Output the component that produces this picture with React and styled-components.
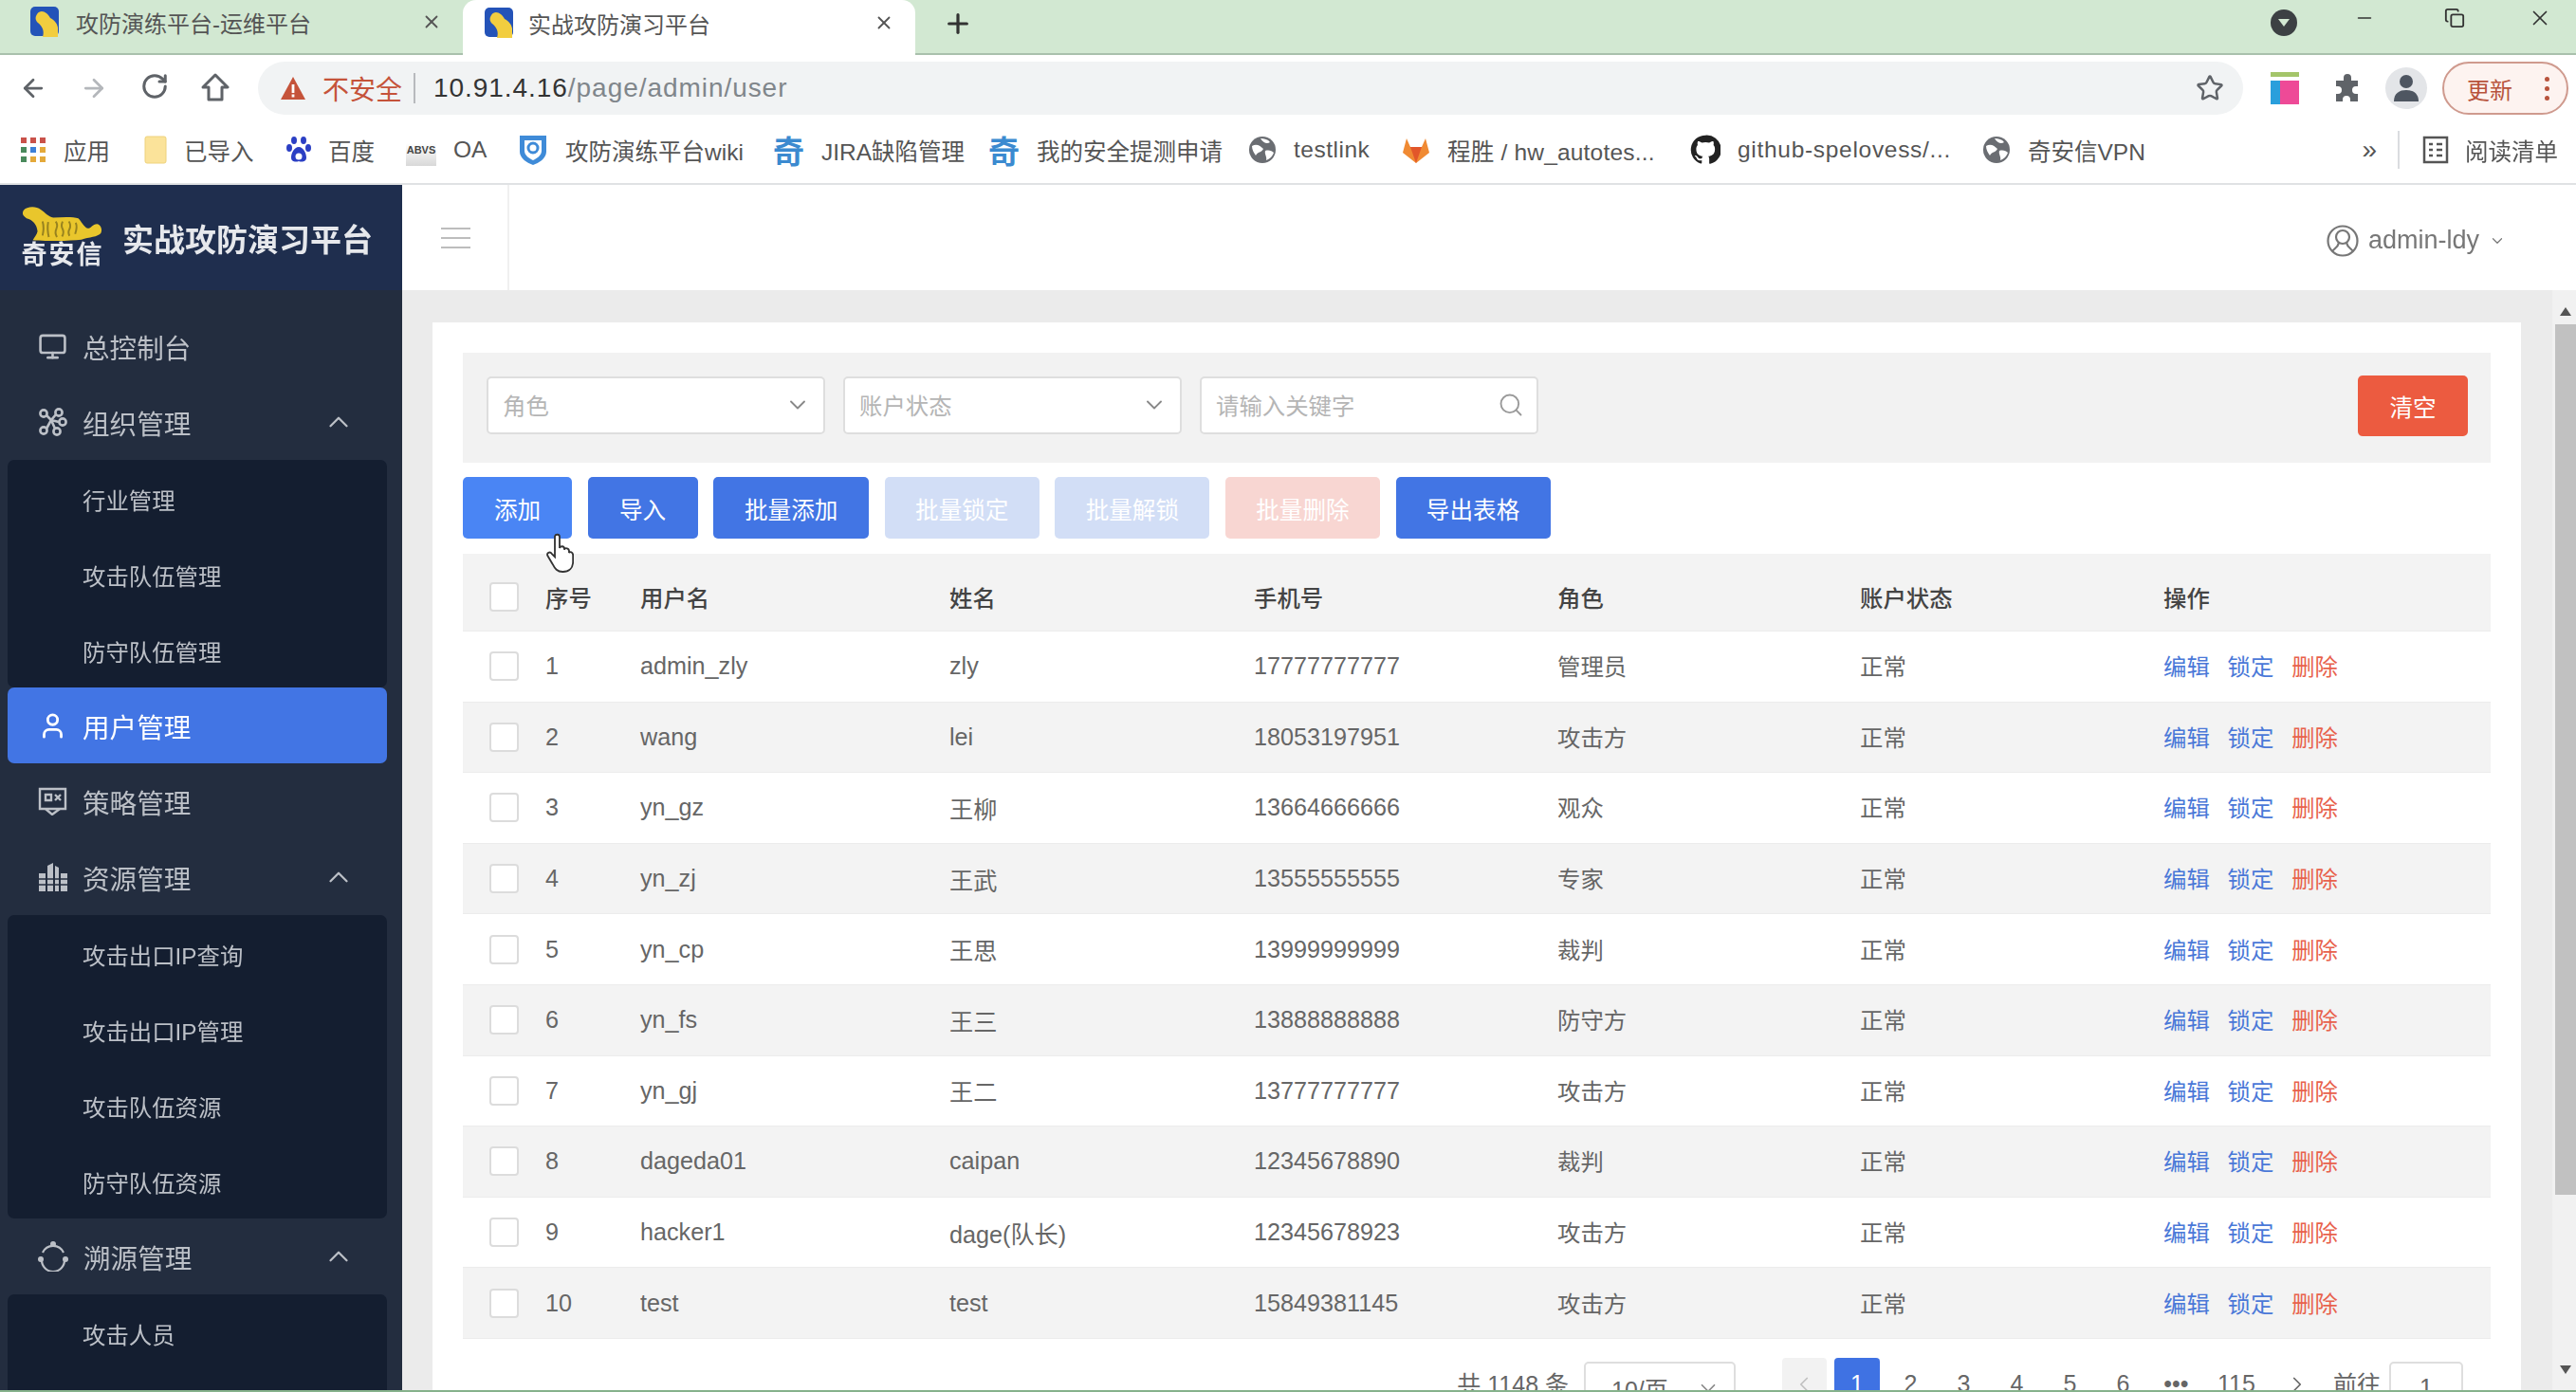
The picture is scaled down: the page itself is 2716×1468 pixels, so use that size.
import React from 'react';
import styled, { createGlobalStyle } from 'styled-components';
import {
  ArrowLeft, ArrowRight, RotateCw, Star, ChevronDown, ChevronUp, ChevronLeft, ChevronRight,
  Search, Monitor, User, Plus, Minus, X, Copy,
} from 'lucide-react';

const Global = createGlobalStyle`
  html, body { margin: 0; padding: 0; overflow: hidden; background: #fff; }
  * { box-sizing: border-box; }
  body { font-family: "Liberation Sans", "Noto Sans CJK SC", sans-serif; }
`;

const Page = styled.div`
  width: 2716px;
  height: 1468px;
  display: flex;
  flex-direction: column;
  overflow: hidden;
  filter: blur(0.6px);
  border-bottom: 2px solid #86b28c;
`;

/* browser chrome */
const TabStrip = styled.div`
  height: 58px;
  flex: none;
  display: flex;
  background: #d2e8d2;
  border-bottom: 2px solid #a9c0ac;
`;
const Tab = styled.div`
  width: ${(p) => p.$w}px;
  height: ${(p) => (p.$active ? 58 : 56)}px;
  padding: 0 22px 10px ${(p) => (p.$active ? 23 : 32)}px;
  display: flex;
  align-items: center;
  gap: ${(p) => (p.$active ? 14 : 16)}px;
  font-size: 24px;
  color: #555;
  background: ${(p) => (p.$active ? '#fff' : 'transparent')};
  border-radius: 14px 14px 0 0;
`;
const TabTitle = styled.span`
  flex: 1;
  white-space: nowrap;
`;
const NewTab = styled.div`
  width: 90px;
  display: flex;
  align-items: center;
  justify-content: center;
  padding-bottom: 6px;
  color: #333;
`;
const WinControls = styled.div`
  margin-left: auto;
  padding: 0 23px 18px 0;
  display: flex;
  align-items: center;
  gap: 60px;
  color: #333;
`;
const WinButton = styled.div`
  width: 30px;
  margin: ${(p) => p.$margin || 0};
  display: flex;
  justify-content: center;
`;
const ProfileDot = styled.div`
  width: 28px;
  height: 28px;
  border-radius: 50%;
  background: #3c4043;
  display: flex;
  align-items: center;
  justify-content: center;
  &::after {
    content: '';
    border-left: 6px solid transparent;
    border-right: 6px solid transparent;
    border-top: 8px solid #d2e8d2;
  }
`;

const Toolbar = styled.div`
  height: 70px;
  flex: none;
  display: flex;
  align-items: center;
  padding: 0 8px 0 20px;
  background: #fff;
`;
const NavButtons = styled.div`
  display: flex;
  gap: 34px;
`;
const NavButton = styled.div`
  width: 30px;
  display: flex;
  justify-content: center;
  color: ${(p) => p.$color || '#5f6368'};
`;
const Omnibox = styled.div`
  flex: 1;
  height: 56px;
  margin-left: 30px;
  padding: 0 20px 0 23px;
  display: flex;
  align-items: center;
  background: #f1f3f4;
  border-radius: 28px;
  font-size: 28px;
  color: #80868b;
`;
const Insecure = styled.span`
  margin-left: 17px;
  font-size: 28px;
  color: #c5533a;
`;
const OmniDivider = styled.span`
  width: 2px;
  height: 32px;
  margin: 0 19px 0 12px;
  background: #b8babd;
`;
const UrlText = styled.span`
  letter-spacing: 0.95px;
`;
const Host = styled.span`
  color: #333;
`;
const OmniStar = styled.div`
  margin-left: auto;
  color: #5f6368;
  display: flex;
`;
const ToolIcons = styled.div`
  margin-left: 29px;
  display: flex;
  align-items: center;
  gap: 36px;
`;
const Avatar = styled.div`
  width: 44px;
  height: 44px;
  margin-left: -11px;
  border-radius: 50%;
  background: #e3e5e8;
  display: flex;
  align-items: center;
  justify-content: center;
`;
const UpdatePill = styled.div`
  width: 133px;
  height: 56px;
  margin-left: 16px;
  padding: 0 18px 0 24px;
  display: flex;
  align-items: center;
  justify-content: space-between;
  border: 2px solid #cf9a8e;
  border-radius: 28px;
  background: #fdf3f0;
  font-size: 24px;
  color: #b8533c;
`;
const Dots = styled.span`
  display: flex;
  flex-direction: column;
  gap: 5px;
  i {
    width: 5px;
    height: 5px;
    border-radius: 50%;
    background: #b8533c;
  }
`;

const Bookmarks = styled.div`
  height: 67px;
  flex: none;
  display: flex;
  align-items: center;
  padding: 0 19px 5px 22px;
  background: #fff;
  border-bottom: 2px solid #e0e2e4;
  font-size: 24.5px;
  color: #555;
`;
const Bookmark = styled.div`
  width: ${(p) => p.$w}px;
  flex: none;
  display: flex;
  align-items: center;
  gap: 18px;
  white-space: nowrap;
  letter-spacing: ${(p) => p.$spacing || 0}px;
`;
const QiGlyph = styled.span`
  width: 33px;
  text-align: center;
  font-size: 33px;
  font-weight: 700;
  color: #3b8ad0;
`;
const AbvsTag = styled.span`
  width: 32px;
  height: 34px;
  background: linear-gradient(#fff 30%, #d8d8d8);
  font-size: 11px;
  font-weight: 700;
  line-height: 34px;
  text-align: center;
  color: #444;
`;
const MoreMarks = styled.div`
  margin-left: auto;
  display: flex;
  align-items: center;
  font-size: 28px;
  color: #555;
`;
const MarkDivider = styled.span`
  width: 2px;
  height: 40px;
  margin: 0 24px 0 22px;
  background: #dadce0;
`;
const ReadingList = styled.span`
  margin-left: 17px;
  font-size: 24.5px;
`;

/* app */
const Shell = styled.div`
  flex: 1;
  min-height: 0;
  display: flex;
  overflow: hidden;
`;
const Sidebar = styled.aside`
  width: 424px;
  flex: none;
  background: #232d3f;
  color: #bcc0c7;
`;
const Brand = styled.div`
  height: 111px;
  padding: 22px 0 0 23px;
  display: flex;
  align-items: flex-start;
  gap: 20px;
  background: #1f2e4e;
`;
const BrandLogo = styled.div`
  width: 86px;
  display: flex;
  flex-direction: column;
  align-items: center;
`;
const BrandCompany = styled.span`
  font-size: 27px;
  line-height: 30px;
  font-weight: 700;
  letter-spacing: 2px;
  white-space: nowrap;
  color: #e6e8ec;
`;
const BrandTitle = styled.div`
  padding-top: 10px;
  font-size: 33px;
  font-weight: 700;
  white-space: nowrap;
  color: #e6e8ec;
`;
const Nav = styled.nav`
  padding: 19px 16px 0 8px;
`;
const NavItem = styled.div`
  height: 80px;
  padding: 0 34px 0 32px;
  display: flex;
  align-items: center;
  gap: 16px;
  font-size: 28.6px;
  border-radius: 7px;
  color: ${(p) => (p.$active ? '#fff' : '#bcc0c7')};
  background: ${(p) => (p.$active ? '#4275e4' : 'transparent')};
`;
const NavLabel = styled.span`
  flex: 1;
`;
const SubMenu = styled.div`
  min-height: ${(p) => p.$minHeight || 0}px;
  background: #141e30;
  border-radius: 7px;
`;
const SubItem = styled.div`
  height: 80px;
  padding: 3px 0 0 79px;
  display: flex;
  align-items: center;
  font-size: 24.4px;
  color: #bcc0c7;
`;

const Main = styled.main`
  flex: 1;
  min-width: 0;
  display: flex;
  flex-direction: column;
`;
const TopBar = styled.header`
  height: 111px;
  flex: none;
  display: flex;
  align-items: center;
  background: #fff;
`;
const Hamburger = styled.div`
  width: 113px;
  height: 100%;
  padding-left: 41px;
  display: flex;
  flex-direction: column;
  justify-content: center;
  gap: 8px;
  border-right: 2px solid #f0f0f0;
  i {
    width: 31px;
    height: 2px;
    background: #bdbdbd;
  }
`;
const UserBox = styled.div`
  margin-left: auto;
  padding: 6px 74px 0 0;
  display: flex;
  align-items: center;
  gap: 10px;
  font-size: 27px;
  color: #777;
`;
const Body = styled.div`
  flex: 1;
  min-height: 0;
  display: flex;
  background: #ebebeb;
`;
const Content = styled.div`
  flex: 1;
  min-width: 0;
  padding: 34px 33px 0 32px;
  overflow: hidden;
`;
const Card = styled.section`
  padding: 32px 32px 0;
  background: #fff;
  height: 1400px;
`;
const FilterBar = styled.div`
  height: 116px;
  padding: 0 24px 5px 25px;
  display: flex;
  align-items: center;
  gap: 19px;
  background: #f2f2f2;
`;
const Field = styled.div`
  width: 357px;
  height: 61px;
  padding: 0 13px 2px 15px;
  display: flex;
  align-items: center;
  justify-content: space-between;
  background: #fff;
  border: 2px solid #dedede;
  border-radius: 5px;
  font-size: 24.4px;
  color: #b5b5b5;
`;
const ClearButton = styled.div`
  width: 116px;
  height: 64px;
  margin-left: auto;
  display: flex;
  align-items: center;
  justify-content: center;
  background: #ec5b40;
  border-radius: 5px;
  font-size: 24.6px;
  color: #fff;
`;
const Actions = styled.div`
  margin: 15px 0 16px;
  display: flex;
  gap: 16.6px;
`;
const tones = {
  primary: '#4275e4',
  hover: '#4a85f4',
  muted: '#d2def6',
  danger: '#f8d6d2',
};
const ActionButton = styled.div`
  position: relative;
  width: ${(p) => p.$w}px;
  height: 65px;
  display: flex;
  align-items: center;
  justify-content: center;
  background: ${(p) => tones[p.$tone]};
  border-radius: 5px;
  font-size: 24.6px;
  color: #fff;
`;
const HandCursor = styled.svg`
  position: absolute;
  left: 87px;
  top: 56px;
`;

const Row = styled.div`
  height: ${(p) => (p.$head ? 82 : 74.6)}px;
  padding-top: ${(p) => (p.$head ? 9 : 0)}px;
  display: grid;
  grid-template-columns: 87px 100px 326px 321px 320px 319px 320px 1fr;
  align-items: center;
  background: ${(p) => (p.$shade ? '#f3f3f3' : '#fff')};
  border-bottom: 1px solid #ececec;
  font-size: ${(p) => (p.$head ? 24.4 : 25.2)}px;
  color: ${(p) => (p.$head ? '#444' : '#666')};
  font-weight: ${(p) => (p.$head ? 500 : 400)};
`;
const CjkCell = styled.div`
  padding-bottom: 2px;
  font-size: 24.4px;
`;
const CheckCell = styled.div`
  padding-left: 28px;
`;
const CheckBox = styled.span`
  display: block;
  width: 31px;
  height: 31px;
  background: #fff;
  border: 2px solid #dcdcdc;
  border-radius: 4px;
`;
const Links = styled(CjkCell)`
  display: flex;
  gap: 18.8px;
`;
const LinkText = styled.span`
  color: ${(p) => (p.$danger ? '#e8624c' : '#4a78d8')};
`;

const Pager = styled.div`
  margin-top: 20px;
  padding-right: 29px;
  display: flex;
  justify-content: flex-end;
  align-items: flex-start;
  font-size: 25px;
  color: #666;
`;
const PagerTotal = styled.span`
  margin: 8px 16px 0 0;
`;
const PagerSelect = styled.div`
  width: 160px;
  height: 56px;
  margin: 4px 49px 0 0;
  padding: 0 14px 0 27px;
  display: flex;
  align-items: center;
  justify-content: space-between;
  border: 2px solid #dedede;
  border-radius: 5px;
`;
const PageButton = styled.div`
  min-width: ${(p) => p.$w || 47}px;
  height: 56px;
  margin-right: ${(p) => p.$gap ?? 9}px;
  display: flex;
  align-items: center;
  justify-content: center;
  border-radius: 4px;
  background: ${(p) => (p.$active ? '#3f72e3' : p.$box ? '#f2f2f2' : 'transparent')};
  color: ${(p) => (p.$active ? '#fff' : p.$box ? '#c0c0c0' : '#666')};
`;
const PagerJump = styled.span`
  margin: 8px 9px 0 0;
`;
const PagerInput = styled.div`
  width: 78px;
  height: 56px;
  margin-top: 4px;
  display: flex;
  align-items: center;
  justify-content: center;
  border: 2px solid #dedede;
  border-radius: 5px;
`;

const ScrollBar = styled.div`
  width: 25px;
  flex: none;
  padding: 8px 0 8px 3px;
  display: flex;
  flex-direction: column;
  align-items: stretch;
  background: #f1f1f1;
`;
const ScrollArrow = styled.div`
  height: 28px;
  display: flex;
  justify-content: center;
  align-items: center;
  &::after {
    content: '';
    border-left: 6px solid transparent;
    border-right: 6px solid transparent;
    ${(p) => (p.$down ? 'border-top: 9px solid #555;' : 'border-bottom: 9px solid #555;')}
  }
`;
const ScrollThumb = styled.div`
  height: 918px;
  background: #c1c1c1;
`;
const ScrollGap = styled.div`
  flex: 1;
`;

/* drawings */
const Favicon = () => (
  <svg width="32" height="32" viewBox="0 0 32 32">
    <rect x="0" y="0" width="30" height="31" rx="5" fill="#2453b8" />
    <path d="M7 8 C11 2 18 6 21 12 C25 14 28 17 29 22 L29 32 L13 32 C15 26 13 21 8 17 C5 14 5 11 7 8Z" fill="#f2cd3f" />
  </svg>
);

const TigerLogo = () => (
  <svg width="86" height="37" viewBox="0 0 260 112">
    <path
      d="M5 15 C15 2 45 0 60 12 C75 22 85 35 100 38 C130 36 165 35 180 40 C190 50 198 68 210 72 C222 72 225 58 240 58 C252 60 258 75 252 88 C242 100 215 100 190 108 C150 112 80 114 35 110 C40 100 48 92 50 82 C48 60 35 45 15 40 C3 32 0 25 5 15Z"
      fill="#e9c62c"
    />
    <path
      d="M66 50 q6 20 0 45 M84 52 q-4 22 2 48 M108 50 q8 10 2 24 q-6 12 2 26 M130 50 q-6 14 0 24 q6 12 -2 24 M150 50 q8 12 2 24 q-6 10 0 22 M172 54 q6 14 -2 36"
      stroke="#97821f"
      strokeWidth="6"
      fill="none"
    />
  </svg>
);

const AppsGrid = () => {
  const colors = ['#c9524a', '#c9524a', '#c9524a', '#4a8a5c', '#3d80d8', '#e4a93a', '#4a8a5c', '#e4a93a', '#e4a93a'];
  return (
    <svg width="27" height="27" viewBox="0 0 27 27">
      {colors.map((c, i) => (
        <rect key={i} x={(i % 3) * 10} y={Math.floor(i / 3) * 10} width="6" height="6" fill={c} />
      ))}
    </svg>
  );
};

const FolderIcon = () => (
  <svg width="24" height="30" viewBox="0 0 24 30">
    <rect x="1" y="1" width="22" height="28" rx="2" fill="#fbe39a" stroke="#eed27c" />
  </svg>
);

const PawIcon = () => (
  <svg width="26" height="28" viewBox="0 0 26 28" fill="#2b3fc4">
    <ellipse cx="8" cy="4" rx="3" ry="4" />
    <ellipse cx="18" cy="4" rx="3" ry="4" />
    <ellipse cx="3" cy="12" rx="3" ry="4" />
    <ellipse cx="23" cy="12" rx="3" ry="4" />
    <path d="M13 11 C18 11 21 18 21 22 C21 27 16 27 13 26 C10 27 5 27 5 22 C5 18 8 11 13 11Z" />
    <circle cx="13" cy="21" r="3.5" fill="#fff" />
  </svg>
);

const ShieldIcon = () => (
  <svg width="32" height="34" viewBox="0 0 32 34" fill="none">
    <path d="M2 2 H30 V19 C30 26 22 31 16 33 C10 31 2 26 2 19Z" fill="#3f8bd8" />
    <path d="M7 7 H25 V18 C25 23 20 26 16 28 C12 26 7 23 7 18Z" fill="#fff" />
    <circle cx="16" cy="15" r="5" stroke="#3f8bd8" strokeWidth="3" />
  </svg>
);

const GlobeIcon = () => (
  <svg width="30" height="30" viewBox="0 0 30 30">
    <circle cx="15" cy="15" r="14" fill="#6a6d72" />
    <path d="M4 11 C9 8 13 11 16 14 C14 18 10 17 8 21 C6 18 4 15 4 11Z M18 16 C22 15 25 16 27 18 C25 23 22 25 19 26 C20 22 17 20 18 16Z M13 3 C17 3 21 4 23 7 C20 9 16 8 13 3Z" fill="#fff" />
  </svg>
);

const FoxIcon = () => (
  <svg width="30" height="30" viewBox="0 0 30 30">
    <path d="M15 29 L1 18 L5 3 L9 12 H21 L25 3 L29 18Z" fill="#f08a33" />
    <path d="M15 29 L9 12 H21Z" fill="#e2562a" />
  </svg>
);

const GithubIcon = () => (
  <svg width="32" height="34" viewBox="0 0 24 24" fill="#222">
    <path d="M12 .5A11.5 11.5 0 0 0 8.4 22.9c.6.1.8-.2.8-.6v-2c-3.2.7-3.9-1.4-3.9-1.4-.5-1.3-1.3-1.7-1.3-1.7-1-.7.1-.7.1-.7 1.2.1 1.8 1.2 1.8 1.2 1 1.8 2.8 1.3 3.4 1 .1-.8.4-1.3.8-1.6-2.6-.3-5.3-1.3-5.3-5.7 0-1.3.5-2.3 1.2-3.1-.1-.3-.5-1.5.1-3.1 0 0 1-.3 3.2 1.2a11 11 0 0 1 5.8 0c2.2-1.5 3.2-1.2 3.2-1.2.6 1.6.2 2.8.1 3.1.8.8 1.2 1.8 1.2 3.1 0 4.4-2.7 5.4-5.3 5.7.4.4.8 1.1.8 2.2v3.2c0 .3.2.7.8.6A11.5 11.5 0 0 0 12 .5Z" />
  </svg>
);

const ReadingIcon = () => (
  <svg width="28" height="30" viewBox="0 0 28 30" fill="none" stroke="#555" strokeWidth="2.5">
    <rect x="2" y="2" width="24" height="26" />
    <path d="M7 9 H11 M15 9 H21 M7 15 H11 M15 15 H21 M7 21 H11 M15 21 H21" />
  </svg>
);

const WarnIcon = () => (
  <svg width="28" height="26" viewBox="0 0 28 26">
    <path d="M14 1 L27 25 H1Z" fill="#c5533a" />
    <rect x="12.6" y="9" width="2.8" height="9" fill="#fff" />
    <rect x="12.6" y="19.5" width="2.8" height="3" fill="#fff" />
  </svg>
);

const HomeIcon = () => (
  <svg width="30" height="32" viewBox="0 0 30 32" fill="none" stroke="#5f6368" strokeWidth="3" strokeLinejoin="round">
    <path d="M15 3 L28 16 H22 V29 H8 V16 H2Z" />
  </svg>
);

const PuzzleIcon = () => (
  <svg width="30" height="32" viewBox="0 0 30 32" fill="#5f6368">
    <path d="M11 5 a4 4 0 0 1 8 0 V8 H26 V14 h-2 a4 4 0 0 0 0 8 h2 V30 H18 V28 a4 4 0 0 0 -8 0 V30 H3 V22 h2 a4 4 0 0 0 0 -8 H3 V8 H11Z" />
  </svg>
);

const ExtIcon = () => (
  <svg width="30" height="34" viewBox="0 0 30 34">
    <rect x="0" y="0" width="30" height="5" fill="#a4c56a" />
    <rect x="0" y="9" width="10" height="25" fill="#2a9fdc" />
    <rect x="10" y="9" width="20" height="25" fill="#ee4a97" />
  </svg>
);

const AccountIcon = () => (
  <svg width="34" height="38" viewBox="0 0 34 38" fill="none" stroke="#777" strokeWidth="2.2">
    <circle cx="17" cy="19" r="15.5" />
    <circle cx="17" cy="15" r="7" />
    <path d="M13 21 C12 26 8 27 6 30 M21 21 C22 26 26 27 28 30" />
  </svg>
);

const OrgIcon = () => (
  <svg width="31" height="30" viewBox="0 0 31 30" fill="none" stroke="currentColor" strokeWidth="2.6">
    <circle cx="6" cy="6" r="3.6" />
    <circle cx="22" cy="5" r="3.6" />
    <circle cx="6" cy="24" r="3.6" />
    <circle cx="26" cy="15" r="3.6" />
    <circle cx="20" cy="25" r="3.6" />
    <path d="M9 8 L14 13 L19 7 M14 13 L22 15 M14 13 L9 22 M14 13 L18 22" />
  </svg>
);

const PolicyIcon = () => (
  <svg width="31" height="30" viewBox="0 0 31 30" fill="none" stroke="currentColor" strokeWidth="2.4">
    <path d="M2 2 H29 V23 H2Z" />
    <path d="M8 8 H14 V14 H8Z M18 8 L24 14 M24 8 L18 14 M8 23 L15 29 L23 23" />
  </svg>
);

const BuildingIcon = () => (
  <svg width="31" height="32" viewBox="0 0 31 32" fill="currentColor">
    <path d="M10 4 L16 1 V31 H10Z M18 4 L22 6 V31 H18Z M1 12 H8 V31 H1Z M24 12 H31 V31 H24Z" />
    <path d="M1 18 H31 M1 24 H31" stroke="#232d3f" strokeWidth="1.6" />
  </svg>
);

const TraceIcon = () => (
  <svg width="32" height="32" viewBox="0 0 32 32" fill="none" stroke="currentColor" strokeWidth="2.2">
    <path d="M5 12 A12 12 0 0 1 27 12 M28 20 A12 12 0 0 1 4 20" />
    <g fill="currentColor" stroke="none">
      <circle cx="16" cy="3" r="3" />
      <circle cx="3" cy="19" r="3" />
      <circle cx="29" cy="19" r="3" />
    </g>
  </svg>
);

const bookmarks = [
  { w: 130, icon: <AppsGrid />, label: '应用' },
  { w: 150, icon: <FolderIcon />, label: '已导入' },
  { w: 126, icon: <PawIcon />, label: '百度' },
  { w: 118, icon: <AbvsTag>ABVS</AbvsTag>, label: 'OA' },
  { w: 269, icon: <ShieldIcon />, label: '攻防演练平台wiki' },
  { w: 227, icon: <QiGlyph>奇</QiGlyph>, label: 'JIRA缺陷管理' },
  { w: 274, icon: <QiGlyph>奇</QiGlyph>, label: '我的安全提测申请' },
  { w: 162, icon: <GlobeIcon />, label: 'testlink', spacing: 0.5 },
  { w: 304, icon: <FoxIcon />, label: '程胜 / hw_autotes...', spacing: 0.2 },
  { w: 308, icon: <GithubIcon />, label: 'github-spelovess/...', spacing: 0.7 },
  { w: 180, icon: <GlobeIcon />, label: '奇安信VPN' },
];

const actions = [
  { label: '添加', w: 115, tone: 'hover', hand: true },
  { label: '导入', w: 116, tone: 'primary' },
  { label: '批量添加', w: 164, tone: 'primary' },
  { label: '批量锁定', w: 163, tone: 'muted' },
  { label: '批量解锁', w: 163, tone: 'muted' },
  { label: '批量删除', w: 163, tone: 'danger' },
  { label: '导出表格', w: 163, tone: 'primary' },
];

const users = [
  ['admin_zly', 'zly', '17777777777', '管理员'],
  ['wang', 'lei', '18053197951', '攻击方'],
  ['yn_gz', '王柳', '13664666666', '观众'],
  ['yn_zj', '王武', '13555555555', '专家'],
  ['yn_cp', '王思', '13999999999', '裁判'],
  ['yn_fs', '王三', '13888888888', '防守方'],
  ['yn_gj', '王二', '13777777777', '攻击方'],
  ['dageda01', 'caipan', '12345678890', '裁判'],
  ['hacker1', 'dage(队长)', '12345678923', '攻击方'],
  ['test', 'test', '15849381145', '攻击方'],
];

const columns = ['序号', '用户名', '姓名', '手机号', '角色', '账户状态', '操作'];

const Group = ({ icon, label, items, minHeight }) => (
  <>
    <NavItem>
      {icon}
      <NavLabel>{label}</NavLabel>
      <ChevronUp size={34} strokeWidth={1.6} />
    </NavItem>
    <SubMenu $minHeight={minHeight}>
      {items.map((item) => (
        <SubItem key={item}>{item}</SubItem>
      ))}
    </SubMenu>
  </>
);

export default function App() {
  return (
    <Page>
      <Global />
      <TabStrip>
        <Tab $w={488}>
          <Favicon />
          <TabTitle>攻防演练平台-运维平台</TabTitle>
          <X size={22} />
        </Tab>
        <Tab $w={477} $active>
          <Favicon />
          <TabTitle>实战攻防演习平台</TabTitle>
          <X size={22} />
        </Tab>
        <NewTab>
          <Plus size={32} strokeWidth={2.4} />
        </NewTab>
        <WinControls>
          <WinButton $margin="10px 0 0 0"><ProfileDot /></WinButton>
          <WinButton $margin="0 5px 0 -5px"><Minus size={22} strokeWidth={1.8} /></WinButton>
          <WinButton><Copy size={22} /></WinButton>
          <WinButton><X size={26} strokeWidth={1.6} /></WinButton>
        </WinControls>
      </TabStrip>

      <Toolbar>
        <NavButtons>
          <NavButton><ArrowLeft size={34} strokeWidth={2.2} /></NavButton>
          <NavButton $color="#b4b7bb"><ArrowRight size={34} strokeWidth={2.2} /></NavButton>
          <NavButton><RotateCw size={30} strokeWidth={2.4} /></NavButton>
          <NavButton><HomeIcon /></NavButton>
        </NavButtons>
        <Omnibox>
          <WarnIcon />
          <Insecure>不安全</Insecure>
          <OmniDivider />
          <UrlText><Host>10.91.4.16</Host>/page/admin/user</UrlText>
          <OmniStar><Star size={30} strokeWidth={2} /></OmniStar>
        </Omnibox>
        <ToolIcons>
          <ExtIcon />
          <PuzzleIcon />
          <Avatar>
            <svg width="28" height="30" viewBox="0 0 28 30" fill="#4e5661">
              <circle cx="14" cy="8" r="7" />
              <path d="M1 29 C1 20 7 17 14 17 C21 17 27 20 27 29Z" />
            </svg>
          </Avatar>
        </ToolIcons>
        <UpdatePill>
          更新
          <Dots><i /><i /><i /></Dots>
        </UpdatePill>
      </Toolbar>

      <Bookmarks>
        {bookmarks.map((b) => (
          <Bookmark key={b.label} $w={b.w} $spacing={b.spacing}>
            {b.icon}
            {b.label}
          </Bookmark>
        ))}
        <MoreMarks>
          »
          <MarkDivider />
          <ReadingIcon />
          <ReadingList>阅读清单</ReadingList>
        </MoreMarks>
      </Bookmarks>

      <Shell>
        <Sidebar>
          <Brand>
            <BrandLogo>
              <TigerLogo />
              <BrandCompany>奇安信</BrandCompany>
            </BrandLogo>
            <BrandTitle>实战攻防演习平台</BrandTitle>
          </Brand>
          <Nav>
            <NavItem>
              <Monitor size={31} strokeWidth={2} />
              <NavLabel>总控制台</NavLabel>
            </NavItem>
            <Group icon={<OrgIcon />} label="组织管理" items={['行业管理', '攻击队伍管理', '防守队伍管理']} />
            <NavItem $active>
              <User size={31} strokeWidth={2.2} />
              <NavLabel>用户管理</NavLabel>
            </NavItem>
            <NavItem>
              <PolicyIcon />
              <NavLabel>策略管理</NavLabel>
            </NavItem>
            <Group
              icon={<BuildingIcon />}
              label="资源管理"
              items={['攻击出口IP查询', '攻击出口IP管理', '攻击队伍资源', '防守队伍资源']}
            />
            <Group icon={<TraceIcon />} label="溯源管理" items={['攻击人员']} minHeight={160} />
          </Nav>
        </Sidebar>

        <Main>
          <TopBar>
            <Hamburger><i /><i /><i /></Hamburger>
            <UserBox>
              <AccountIcon />
              admin-ldy
              <ChevronDown size={18} strokeWidth={1.6} />
            </UserBox>
          </TopBar>
          <Body>
            <Content>
              <Card>
                <FilterBar>
                  <Field>角色<ChevronDown size={28} strokeWidth={1.6} color="#888" /></Field>
                  <Field>账户状态<ChevronDown size={28} strokeWidth={1.6} color="#888" /></Field>
                  <Field>请输入关键字<Search size={28} strokeWidth={1.6} color="#999" /></Field>
                  <ClearButton>清空</ClearButton>
                </FilterBar>
                <Actions>
                  {actions.map((a) => (
                    <ActionButton key={a.label} $w={a.w} $tone={a.tone}>
                      {a.label}
                      {a.hand && (
                        <HandCursor width="30" height="48" viewBox="0 0 36 50" fill="#fff" stroke="#333" strokeWidth="2.2">
                          <path d="M12 4 c1-3 6-3 6 1 v14 c1-3 6-3 6 1 v1 c1-3 6-2 6 2 v2 c1-2 5-1 5 3 v8 c0 8-5 13-13 13 c-7 0-10-4-13-10 l-6-10 c-2-4 3-6 5-3 l4 4 z" />
                        </HandCursor>
                      )}
                    </ActionButton>
                  ))}
                </Actions>
                <Row $head $shade>
                  <CheckCell><CheckBox /></CheckCell>
                  {columns.map((c) => (
                    <div key={c}>{c}</div>
                  ))}
                </Row>
                {users.map((u, i) => (
                  <Row key={u[0]} $shade={i % 2 === 1}>
                    <CheckCell><CheckBox /></CheckCell>
                    <div>{i + 1}</div>
                    <div>{u[0]}</div>
                    <div>{u[1]}</div>
                    <div>{u[2]}</div>
                    <CjkCell>{u[3]}</CjkCell>
                    <CjkCell>正常</CjkCell>
                    <Links>
                      <LinkText>编辑</LinkText>
                      <LinkText>锁定</LinkText>
                      <LinkText $danger>删除</LinkText>
                    </Links>
                  </Row>
                ))}
                <Pager>
                  <PagerTotal>共 1148 条</PagerTotal>
                  <PagerSelect>10/页<ChevronDown size={26} strokeWidth={1.6} color="#888" /></PagerSelect>
                  <PageButton $box $gap={8}><ChevronLeft size={26} strokeWidth={1.6} /></PageButton>
                  <PageButton $active $w={48} $gap={9}>1</PageButton>
                  {['2', '3', '4', '5', '6', '•••'].map((n) => (
                    <PageButton key={n}>{n}</PageButton>
                  ))}
                  <PageButton $w={62} $gap={16}>115</PageButton>
                  <PageButton $w={34} $gap={21}><ChevronRight size={26} strokeWidth={1.6} /></PageButton>
                  <PagerJump>前往</PagerJump>
                  <PagerInput>1</PagerInput>
                </Pager>
              </Card>
            </Content>
            <ScrollBar>
              <ScrollArrow />
              <ScrollThumb />
              <ScrollGap />
              <ScrollArrow $down />
            </ScrollBar>
          </Body>
        </Main>
      </Shell>
    </Page>
  );
}
